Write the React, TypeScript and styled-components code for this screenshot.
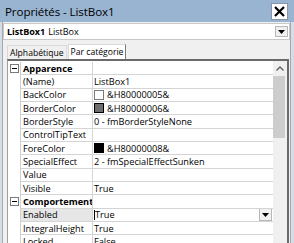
import React from "react";
import styled, { createGlobalStyle } from "styled-components";

const GlobalStyle = createGlobalStyle`
  html, body {
    margin: 0;
    padding: 0;
    background: #f0f0f0;
  }
  body {
    font-family: "Open Sans", "Liberation Sans", sans-serif;
    color: #000;
  }
`;

const ROW_H = 13.333;

const Window = styled.div`
  width: 294px;
  height: 243px;
  overflow: hidden;
  display: flex;
  flex-direction: column;
  background: #d5dde8;
`;

const TitleBar = styled.div`
  height: 22px;
  flex: none;
  display: flex;
  align-items: center;
  justify-content: space-between;
  background: #99b4d1;
  padding-left: 5px;
`;

const Title = styled.span`
  font-size: 11.6px;
  color: #000;
  letter-spacing: -0.1px;
`;

const CloseButton = styled.div`
  width: 15px;
  height: 15px;
  margin-right: 6px;
  background: #fff;
  border: 1px solid #8a96a6;
  display: flex;
  align-items: center;
  justify-content: center;
`;

const Body = styled.div`
  flex: 1;
  min-height: 0;
  margin: 0 3px 0 2px;
  border-left: 1px solid #a8a8a8;
  border-right: 1px solid #a8a8a8;
  background: #f0f0f0;
  display: flex;
  flex-direction: column;
`;

const Combo = styled.div`
  margin-top: 1px;
  height: 15px;
  flex: none;
  background: #fff;
  border: 1px solid #c8c8c8;
  display: flex;
  align-items: center;
  padding-left: 3px;
  font-size: 9px;
`;

const ComboName = styled.span`
  font-weight: 700;
  margin-right: 3px;
`;

const ComboType = styled.span`
  flex: 1;
`;

const DropButton = styled.div<{ $h: number }>`
  width: 13px;
  height: ${(p) => p.$h}px;
  margin-right: 1px;
  background: #f0f0f0;
  border: 1px solid #b8b8b8;
  box-sizing: border-box;
  display: flex;
  align-items: center;
  justify-content: center;
`;

const Tabs = styled.div`
  margin-top: 4px;
  height: 15px;
  flex: none;
  display: flex;
  align-items: flex-end;
  padding-left: 4px;
`;

const Tab = styled.div<{ $active?: boolean }>`
  height: ${(p) => (p.$active ? 15 : 14)}px;
  box-sizing: border-box;
  padding: 0 2px;
  display: flex;
  align-items: center;
  font-size: 8.6px;
  background: ${(p) => (p.$active ? "#fff" : "#f0f0f0")};
  border: 1px solid #d9d9d9;
  border-bottom: none;
  border-right-color: ${(p) => (p.$active ? "#7a7a7a" : "#d9d9d9")};
  margin-right: 1px;
`;

const Grid = styled.div`
  flex: 1;
  min-height: 0;
  margin-left: 4px;
  margin-right: 1px;
  border-top: 2px solid #6a6a6a;
  border-left: 1px solid #a0a0a0;
  border-right: 2px solid #6a6a6a;
  background: #fff;
  display: flex;
`;

const Rows = styled.div`
  flex: 1;
  min-width: 0;
  padding-top: 1px;
`;

const Row = styled.div`
  height: ${ROW_H}px;
  display: grid;
  grid-template-columns: 13px 72px 1fr;
  font-size: 9.2px;
`;

const Gutter = styled.div`
  border-right: 1px solid #d0d0d0;
  display: flex;
  align-items: center;
  justify-content: center;
`;

const Cell = styled.div<{ $selected?: boolean; $bold?: boolean }>`
  box-sizing: border-box;
  border-bottom: 1px solid #d4d4d4;
  border-right: 1px solid #d4d4d4;
  display: flex;
  align-items: center;
  padding-left: 2px;
  white-space: nowrap;
  overflow: hidden;
  background: ${(p) => (p.$selected ? "#e6e6e6" : "#fff")};
  font-weight: ${(p) => (p.$bold ? 700 : 400)};
`;

const ValueCell = styled(Cell)`
  border-right: none;
  padding-left: 1px;
`;

const ValueText = styled.span`
  flex: 1;
`;

const Swatch = styled.span<{ $color: string }>`
  width: 10px;
  height: 10px;
  box-sizing: border-box;
  border: 1px solid ${(p) => (p.$color === "#ffffff" ? "#7a7a7a" : "#000")};
  background: ${(p) => p.$color};
  margin-right: 3px;
  flex: none;
`;

const ExpandBox = styled.span`
  width: 9px;
  height: 9px;
  box-sizing: border-box;
  border: 1px solid #7a7a7a;
  background: #fff;
  display: flex;
  align-items: center;
  justify-content: center;
  &::after {
    content: "";
    width: 5px;
    height: 1px;
    background: #000;
  }
`;

const Caret = styled.span`
  width: 1px;
  height: 10px;
  background: #000;
  margin-right: 0;
`;

const Scrollbar = styled.div`
  width: 14px;
  flex: none;
  background: #f0f0f0;
  display: flex;
  flex-direction: column;
`;

const ScrollArrow = styled.div`
  height: 15px;
  display: flex;
  align-items: center;
  justify-content: center;
`;

const Thumb = styled.div`
  margin: 0 2px 0 0;
  height: 62px;
  background: #cdcdcd;
`;

const DownTriangle = () => (
  <svg width="7" height="4" viewBox="0 0 7 4">
    <path d="M0 0h7L3.5 4z" fill="#000" />
  </svg>
);

type Prop = {
  name: string;
  value?: string;
  swatch?: string;
  selected?: boolean;
};

const apparence: Prop[] = [
  { name: "(Name)", value: "ListBox1" },
  { name: "BackColor", value: "&H80000005&", swatch: "#ffffff" },
  { name: "BorderColor", value: "&H80000006&", swatch: "#6d6d6d" },
  { name: "BorderStyle", value: "0 - fmBorderStyleNone" },
  { name: "ControlTipText" },
  { name: "ForeColor", value: "&H80000008&", swatch: "#000000" },
  { name: "SpecialEffect", value: "2 - fmSpecialEffectSunken" },
  { name: "Value" },
  { name: "Visible", value: "True" },
];

const comportement: Prop[] = [
  { name: "Enabled", value: "True", selected: true },
  { name: "IntegralHeight", value: "True" },
  { name: "Locked", value: "False" },
];

const CategoryRow = ({ title }: { title: string }) => (
  <Row>
    <Gutter>
      <ExpandBox />
    </Gutter>
    <Cell $bold>{title}</Cell>
    <ValueCell />
  </Row>
);

const PropRow = ({ p }: { p: Prop }) => (
  <Row>
    <Gutter />
    <Cell $selected={p.selected}>{p.name}</Cell>
    <ValueCell>
      {p.swatch && <Swatch $color={p.swatch} />}
      {p.selected && <Caret />}
      <ValueText>{p.value}</ValueText>
      {p.selected && (
        <DropButton $h={13}>
          <DownTriangle />
        </DropButton>
      )}
    </ValueCell>
  </Row>
);

export default function App() {
  return (
    <>
      <GlobalStyle />
      <Window>
        <TitleBar>
          <Title>Propriétés - ListBox1</Title>
          <CloseButton>
            <svg width="11" height="11" viewBox="0 0 11 11">
              <path d="M1 1l9 9M10 1l-9 9" stroke="#000" strokeWidth="2.2" />
            </svg>
          </CloseButton>
        </TitleBar>
        <Body>
          <Combo>
            <ComboName>ListBox1</ComboName>
            <ComboType>ListBox</ComboType>
            <DropButton $h={11}>
              <DownTriangle />
            </DropButton>
          </Combo>
          <Tabs>
            <Tab>Alphabétique</Tab>
            <Tab $active>Par catégorie</Tab>
          </Tabs>
          <Grid>
            <Rows>
              <CategoryRow title="Apparence" />
              {apparence.map((p) => (
                <PropRow key={p.name} p={p} />
              ))}
              <CategoryRow title="Comportement" />
              {comportement.map((p) => (
                <PropRow key={p.name} p={p} />
              ))}
            </Rows>
            <Scrollbar>
              <ScrollArrow>
                <svg width="8" height="5" viewBox="0 0 8 5">
                  <path d="M0.5 4.5L4 1l3.5 3.5" stroke="#606060" strokeWidth="1.4" fill="none" />
                </svg>
              </ScrollArrow>
              <Thumb />
            </Scrollbar>
          </Grid>
        </Body>
      </Window>
    </>
  );
}
